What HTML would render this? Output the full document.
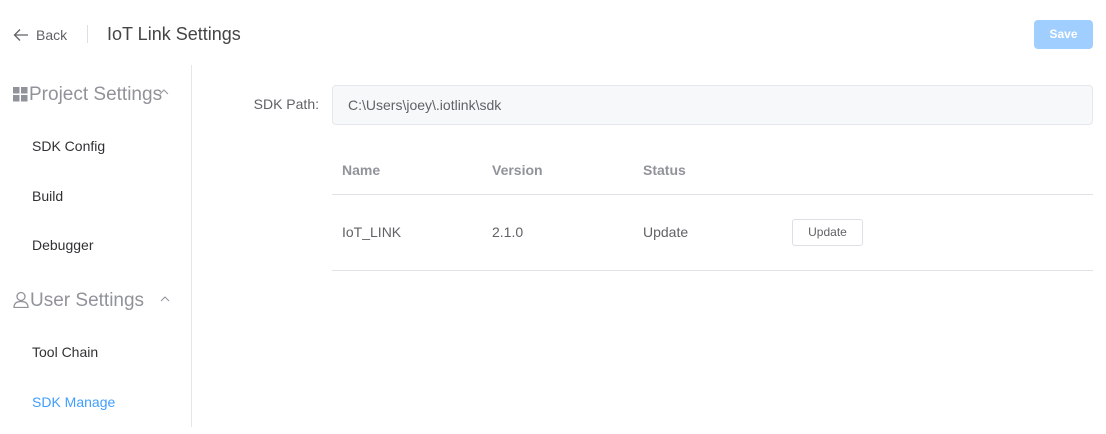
<!DOCTYPE html>
<html><head><meta charset="utf-8"><style>
*{box-sizing:border-box;margin:0;padding:0}
body{width:1106px;height:434px;background:#fff;font-family:"Liberation Sans",sans-serif;color:#606266;position:relative;overflow:hidden}
.a{position:absolute;white-space:nowrap}
</style></head><body>
<svg class="a" style="left:13px;top:28px" width="16" height="14" viewBox="0 0 16 14"><path d="M15 7H2M7 1.5L1.5 7L7 12.5" fill="none" stroke="#606266" stroke-width="1.3"/></svg>
<div class="a" style="left:36px;top:27px;font-size:14px;line-height:16px;color:#606266">Back</div>
<div class="a" style="left:87px;top:25px;width:1px;height:18px;background:#dcdfe6"></div>
<div class="a" style="left:107px;top:24px;font-size:18px;line-height:21px;color:#454545">IoT Link Settings</div>
<div class="a" style="left:1034px;top:20px;width:59px;height:29px;background:#a0cfff;border-radius:4px;color:#fff;font-size:12px;font-weight:bold;text-align:center;line-height:29px">Save</div>

<div class="a" style="left:191px;top:65px;width:1px;height:362px;background:#e6e6e6"></div>
<svg class="a" style="left:13px;top:87px" width="15" height="15" viewBox="0 0 15 15" fill="#909399"><rect x="0" y="0" width="6.5" height="6.5"/><rect x="8" y="0" width="6.5" height="6.5"/><rect x="0" y="8" width="6.5" height="6.5"/><rect x="8" y="8" width="6.5" height="6.5"/></svg>
<div class="a" style="left:29px;top:83px;font-size:19px;line-height:23px;color:#909399">Project Settings</div>
<svg class="a" style="left:159px;top:89px" width="10" height="6" viewBox="0 0 10 6"><path d="M1 5L5 1L9 5" fill="none" stroke="#909399" stroke-width="1"/></svg>
<div class="a" style="left:32px;top:138px;font-size:14px;color:#303133">SDK Config</div>
<div class="a" style="left:32px;top:188px;font-size:14px;color:#303133">Build</div>
<div class="a" style="left:32px;top:237px;font-size:14px;color:#303133">Debugger</div>
<svg class="a" style="left:13px;top:291px" width="16" height="17" viewBox="0 0 16 17"><circle cx="8" cy="5.5" r="4" fill="none" stroke="#909399" stroke-width="1.3"/><path d="M1 16.5C1 12 4 10.5 8 10.5S15 12 15 16.5Z" fill="none" stroke="#909399" stroke-width="1.3"/></svg>
<div class="a" style="left:30px;top:289px;font-size:19px;line-height:23px;color:#909399">User Settings</div>
<svg class="a" style="left:160px;top:296px" width="10" height="6" viewBox="0 0 10 6"><path d="M1 5L5 1L9 5" fill="none" stroke="#909399" stroke-width="1"/></svg>
<div class="a" style="left:32px;top:344px;font-size:14px;color:#303133">Tool Chain</div>
<div class="a" style="left:32px;top:394px;font-size:14px;color:#409eff">SDK Manage</div>

<div class="a" style="left:240px;top:96px;width:79px;text-align:right;font-size:14px;color:#606266">SDK Path:</div>
<div class="a" style="left:332px;top:85px;width:761px;height:40px;background:#f7f8fa;border:1px solid #e4e7ed;border-radius:4px;font-size:14px;line-height:38px;padding-left:15px;color:#606266">C:\Users\joey\.iotlink\sdk</div>

<div class="a" style="left:342px;top:162px;font-size:14px;font-weight:bold;color:#909399">Name</div>
<div class="a" style="left:492px;top:162px;font-size:14px;font-weight:bold;color:#909399">Version</div>
<div class="a" style="left:643px;top:162px;font-size:14px;font-weight:bold;color:#909399">Status</div>
<div class="a" style="left:332px;top:194px;width:761px;height:1px;background:#e0e2e8"></div>
<div class="a" style="left:342px;top:224px;font-size:14px;color:#606266">IoT_LINK</div>
<div class="a" style="left:492px;top:224px;font-size:14px;color:#606266">2.1.0</div>
<div class="a" style="left:643px;top:224px;font-size:14px;color:#606266">Update</div>
<div class="a" style="left:792px;top:219px;width:71px;height:27px;border:1px solid #dcdfe6;border-radius:3px;font-size:12px;line-height:25px;text-align:center;color:#606266">Update</div>
<div class="a" style="left:332px;top:270px;width:761px;height:1px;background:#e0e2e8"></div>
</body></html>
